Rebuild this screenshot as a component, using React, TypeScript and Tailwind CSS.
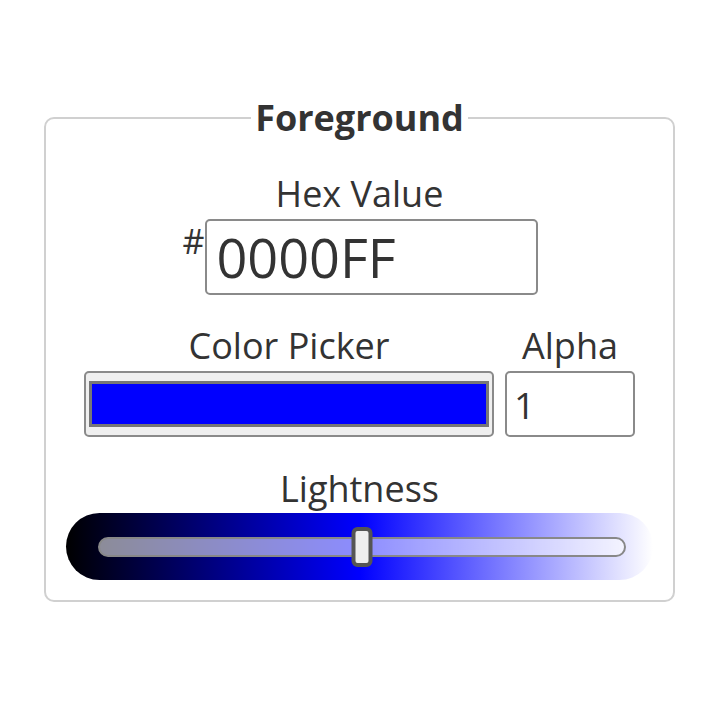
import React from "react";

export default function App() {
  return (
    <div
      className="w-[719px] h-[719px] bg-white text-[#333] pt-[96px]"
      style={{ fontFamily: '"Open Sans", "Liberation Sans", sans-serif' }}
    >
      <fieldset className="mx-auto w-[631px] border-2 border-[#d0d0d0] rounded-[10px] px-[20px] pb-[20px] pt-[34px] min-w-0">
        <legend className="mx-auto px-[4px] text-[36px] leading-[44px] font-bold text-[#333]">
          Foreground
        </legend>

        <div className="flex flex-col items-center">
          <div className="text-[36px] leading-[40px]">Hex Value</div>
          <div className="flex items-start mt-[5px] pl-[2px]">
            <span className="text-[34px] leading-[34px] mt-[5px] mr-[1px]">#</span>
            <div className="w-[333px] h-[76px] border-2 border-[#8a8a8a] rounded-[5px] flex items-center pl-[9px]">
              <span className="text-[54px] leading-none">0000FF</span>
            </div>
          </div>
        </div>

        <div className="flex justify-center gap-[11px] mt-[31px]">
          <div className="flex flex-col items-center">
            <div className="text-[36px] leading-[40px]">Color Picker</div>
            <div className="mt-[5px] w-[410px] h-[66px] border-2 border-[#8a8a8a] rounded-[5px] bg-[#efefef] px-[3px] py-[8px]">
              <div className="w-full h-full bg-[#0000ff] border-[3px] border-[#777]" />
            </div>
          </div>
          <div className="flex flex-col items-center">
            <div className="text-[36px] leading-[40px]">Alpha</div>
            <div className="mt-[5px] w-[130px] h-[66px] border-2 border-[#8a8a8a] rounded-[5px] flex items-center pl-[7px]">
              <span className="text-[37px] leading-none">1</span>
            </div>
          </div>
        </div>

        <div className="flex flex-col items-center mt-[32px]">
          <div className="text-[36px] leading-[40px]">Lightness</div>
          <div className="mt-[4px] w-[587px] h-[67px] rounded-full bg-[linear-gradient(to_right,#000000,#0000ff,#ffffff)] flex items-center pl-[32px] pr-[27px]">
            <div className="relative w-full h-[20px] rounded-full border-2 border-[#888] bg-[rgba(255,255,255,0.55)]">
              <div className="absolute left-1/2 top-1/2 -translate-x-1/2 -translate-y-1/2 w-[21px] h-[40px] rounded-[6px] border-[4px] border-[#555] bg-[#eeeeee]" />
            </div>
          </div>
        </div>
      </fieldset>
    </div>
  );
}
